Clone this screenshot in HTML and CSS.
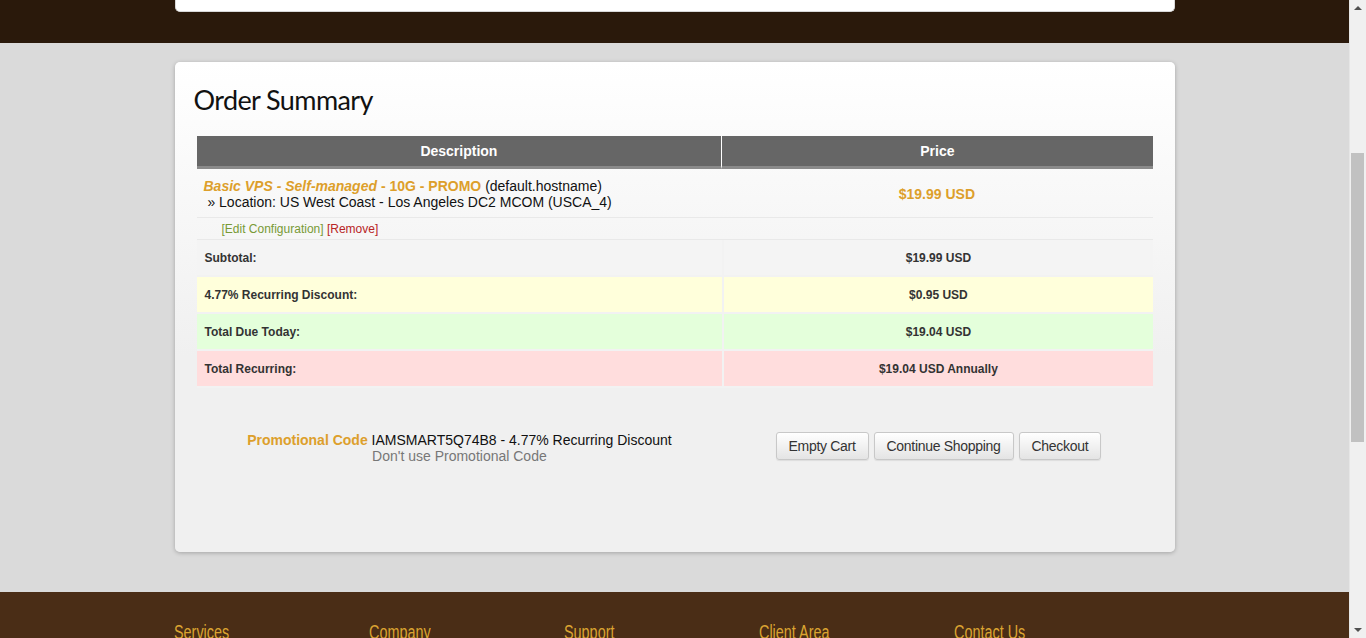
FILE: index.html
```html
<!DOCTYPE html>
<html lang="en">
<head>
<meta charset="utf-8">
<title>Order Summary</title>
<link rel="stylesheet" href="styles.css">
</head>
<body>
<header class="topbar">
  <div class="wrap">
    <div class="top-card"></div>
  </div>
</header>
<main class="page">
  <section class="card">
    <h1 class="title">Order Summary</h1>
    <table class="cart">
      <thead>
        <tr>
          <th class="col-desc">Description</th>
          <th class="col-price">Price</th>
        </tr>
      </thead>
      <tbody>
        <tr class="product">
          <td class="desc">
            <strong class="pname"><em>Basic VPS - Self-managed</em> - 10G - PROMO</strong> (default.hostname)<br>
            &nbsp;» Location: US West Coast - Los Angeles DC2 MCOM (USCA_4)
          </td>
          <td class="price">$19.99 USD</td>
        </tr>
        <tr class="actions">
          <td class="act"><a class="edit" href="#">[Edit Configuration]</a> <a class="remove" href="#">[Remove]</a></td>
          <td></td>
        </tr>
        <tr class="sum subtotal">
          <td class="lbl">Subtotal:</td>
          <td class="val">$19.99 USD</td>
        </tr>
        <tr class="sum discount">
          <td class="lbl">4.77% Recurring Discount:</td>
          <td class="val">$0.95 USD</td>
        </tr>
        <tr class="sum due">
          <td class="lbl">Total Due Today:</td>
          <td class="val">$19.04 USD</td>
        </tr>
        <tr class="sum recurring">
          <td class="lbl">Total Recurring:</td>
          <td class="val">$19.04 USD Annually</td>
        </tr>
      </tbody>
    </table>
    <div class="bottom">
      <div class="promo">
        <div><strong class="promo-label">Promotional Code</strong> IAMSMART5Q74B8 - 4.77% Recurring Discount</div>
        <div><a class="promo-remove" href="#">Don't use Promotional Code</a></div>
      </div>
      <div class="buttons">
        <button class="btn" type="button">Empty Cart</button>
        <button class="btn" type="button">Continue Shopping</button>
        <button class="btn" type="button">Checkout</button>
      </div>
    </div>
  </section>
</main>
<footer class="footer">
  <div class="wrap cols">
    <div class="col"><h3 class="fhead">Services</h3></div>
    <div class="col"><h3 class="fhead">Company</h3></div>
    <div class="col"><h3 class="fhead">Support</h3></div>
    <div class="col"><h3 class="fhead">Client Area</h3></div>
    <div class="col"><h3 class="fhead">Contact Us</h3></div>
  </div>
</footer>
<div class="scrollbar" aria-hidden="true">
  <span class="sb-arrow sb-up"></span>
  <span class="sb-thumb"></span>
  <span class="sb-arrow sb-down"></span>
</div>
</body>
</html>
```
FILE: styles.css
```css
html {
  overflow: hidden;
}
body {
  margin: 0 17px 0 0;
  background: #dadada;
  font-family: "Liberation Sans", Arial, sans-serif;
  font-size: 14px;
  color: #111;
}
.wrap {
  width: 1000px;
  margin: 0 auto;
}
.topbar {
  background: #2a190b;
  height: 43px;
}
.top-card {
  height: 12px;
  background: #fff;
  border-radius: 0 0 5px 5px;
  border: 1px solid #d8d8d8;
  border-top: 0;
  box-sizing: border-box;
}
.page {
  padding: 19px 0 40px;
}
.card {
  width: 1000px;
  height: 490px;
  margin: 0 auto;
  box-sizing: border-box;
  padding: 20px 22px 0;
  background: linear-gradient(#ffffff, #f0f0f0 60%, #f0f0f0);
  border-radius: 5px;
  box-shadow: 0 1px 4px rgba(0,0,0,0.25);
}
.title {
  margin: 0 0 18px -3px;
  font-family: Lato, "Open Sans", sans-serif;
  font-weight: 400;
  font-size: 27px;
  line-height: 36px;
  letter-spacing: -0.6px;
  color: #111;
}
.cart {
  width: 100%;
  border-collapse: separate;
  border-spacing: 0;
}
.cart th {
  background: #666;
  color: #fff;
  font-weight: bold;
  font-size: 14px;
  height: 30px;
  padding: 0;
  border-bottom: 3px solid #8a8a8a;
}
.col-desc {
  width: 55%;
  border-right: 1px solid #fff;
}
.product td {
  padding: 9px 8px 7px 7px;
  line-height: 16px;
  border-bottom: 1px solid #e9e9e9;
  vertical-align: middle;
}
.pname {
  color: #dd9f2b;
}
.product .price {
  text-align: center;
  font-weight: bold;
  color: #dd9f2b;
}
.actions td {
  height: 21px;
  padding: 0;
  border-bottom: 1px solid #e9e9e9;
  font-size: 12px;
}
.act {
  padding-left: 25px !important;
}
.edit {
  color: #789a35;
  text-decoration: none;
}
.remove {
  color: #b82525;
  text-decoration: none;
}
.sum td {
  height: 35px;
  padding: 0 8px;
  font-size: 12px;
  font-weight: bold;
  color: #333;
  border-bottom: 2px solid #f2f2f2;
}
.sum .val {
  text-align: center;
  border-left: 2px solid #f2f2f2;
}
.subtotal td {
  background: #f4f4f4;
  border-left-color: #f4f4f4;
}
.discount td {
  background: #ffffdb;
}
.due td {
  background: #e4ffdb;
}
.recurring td {
  background: #ffdddd;
}
.bottom {
  display: grid;
  grid-template-columns: 55% 45%;
  margin-top: 44px;
}
.promo {
  text-align: center;
  line-height: 16px;
}
.promo-label {
  color: #dd9f2b;
}
.promo-remove {
  color: #777;
  text-decoration: none;
}
.buttons {
  display: flex;
  justify-content: center;
  gap: 5px;
  padding-left: 2px;
}
.btn {
  height: 28px;
  padding: 0 12px;
  border: 1px solid #c8c8c8;
  border-radius: 3px;
  background: linear-gradient(#ffffff, #e4e4e4);
  box-shadow: 0 1px 1px rgba(0,0,0,0.08);
  font-family: "Liberation Sans", Arial, sans-serif;
  font-size: 14px;
  letter-spacing: -0.3px;
  color: #333;
}
.footer {
  background: #4a2d16;
  height: 300px;
  padding-top: 29px;
  box-sizing: border-box;
}
.cols {
  display: flex;
}
.col {
  width: 195px;
}
.fhead {
  display: inline-block;
  margin: 0 0 0 -1px;
  font-family: "Liberation Sans", Arial, sans-serif;
  font-weight: normal;
  font-size: 20px;
  line-height: 22px;
  color: #dba431;
  transform: scaleX(0.72);
  transform-origin: left center;
  white-space: nowrap;
}
.scrollbar {
  position: fixed;
  top: 0;
  right: 0;
  width: 17px;
  height: 100vh;
  background: #f0f0f0;
  border-left: 1px solid #e6e6e6;
  box-sizing: border-box;
}
.sb-thumb {
  position: absolute;
  left: 1px;
  top: 153px;
  width: 13px;
  height: 289px;
  background: #c1c1c1;
}
.sb-arrow {
  position: absolute;
  left: 4px;
  width: 0;
  height: 0;
  border-left: 4px solid transparent;
  border-right: 4px solid transparent;
}
.sb-up {
  top: 6px;
  border-bottom: 4px solid #505050;
}
.sb-down {
  bottom: 6px;
  border-top: 4px solid #505050;
}
```
